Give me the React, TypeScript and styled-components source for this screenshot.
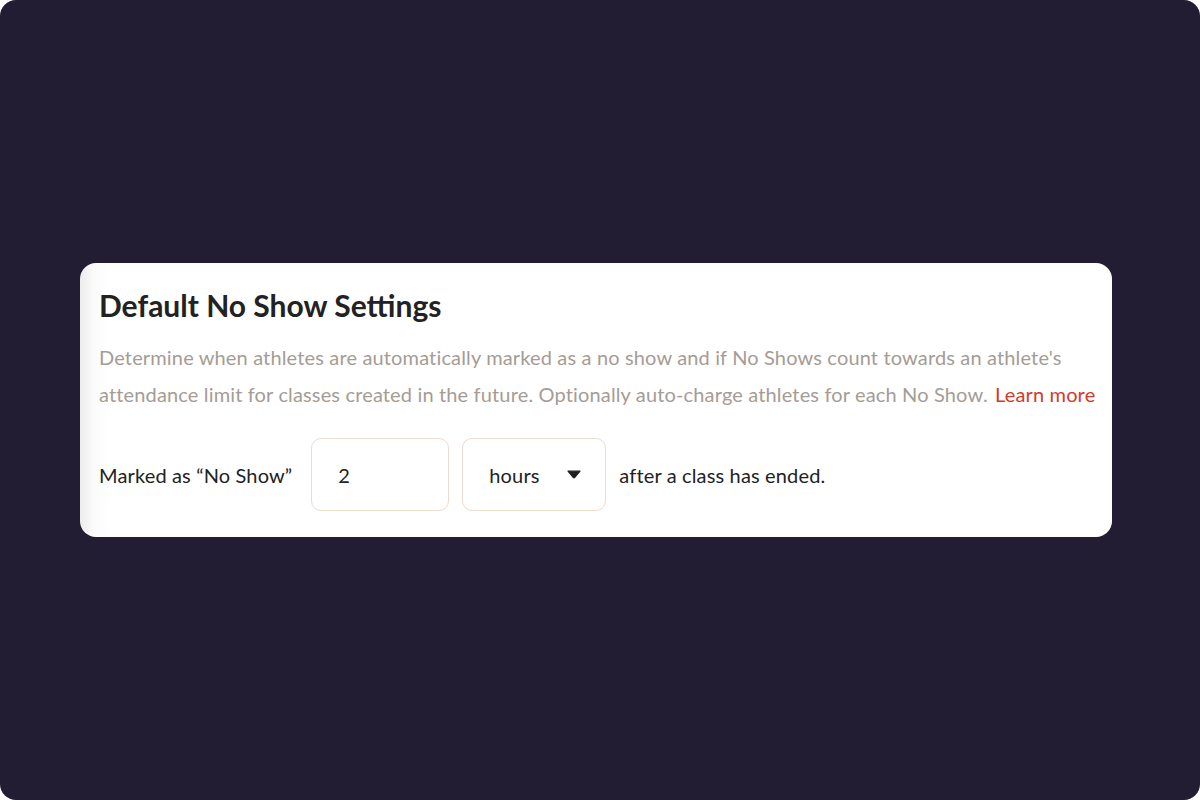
import React from 'react';
import styled, { createGlobalStyle } from 'styled-components';

const GlobalStyle = createGlobalStyle`
  html, body {
    margin: 0;
    padding: 0;
    background: #ffffff;
  }
  body {
    font-family: Lato, "Noto Sans", sans-serif;
  }
`;

const Screen = styled.div`
  width: 1200px;
  height: 800px;
  box-sizing: border-box;
  border-radius: 16px;
  background: #231d33;
  display: flex;
  align-items: center;
  padding-left: 80px;
`;

const Card = styled.section`
  width: 1032px;
  box-sizing: border-box;
  padding: 24px 8px 26px 19px;
  border-radius: 16px;
  background: linear-gradient(90deg, #ececec 0px, #fbfbfb 14px, #ffffff 30px);
`;

const Title = styled.h2`
  margin: 0;
  font-size: 30px;
  line-height: 36px;
  font-weight: 700;
  color: #222222;
`;

const Description = styled.p`
  margin: 16px 0 0;
  font-size: 20px;
  letter-spacing: 0.15px;
  line-height: 37px;
  color: #a59c95;
`;

const LearnMore = styled.a`
  margin-left: 2px;
  color: #d23a2a;
  text-decoration: none;
  white-space: nowrap;
  cursor: pointer;
`;

const Row = styled.div`
  display: flex;
  align-items: center;
  gap: 13px;
  margin-top: 25px;
  font-size: 20px;
  letter-spacing: 0.15px;
  color: #222222;
`;

const Label = styled.span`
  margin-right: 6px;
`;

const Field = styled.div<{ $width: number }>`
  width: ${(p) => p.$width}px;
  height: 73px;
  box-sizing: border-box;
  border: 1.5px solid #ecdccd;
  border-radius: 10px;
  display: flex;
  align-items: center;
  justify-content: space-between;
  padding: 0 24px 0 26px;
  color: #222222;
  background: #ffffff;
`;

const Caret = () => (
  <svg width="14" height="9" viewBox="0 0 14 9">
    <path d="M1 1.2 L13 1.2 L7.6 7.6 Q7 8.2 6.4 7.6 Z" fill="#1f1f1f" stroke="#1f1f1f" strokeWidth="1.2" strokeLinejoin="round" />
  </svg>
);

export default function App() {
  return (
    <>
      <GlobalStyle />
      <Screen>
        <Card>
          <Title>Default No Show Settings</Title>
          <Description>
            Determine when athletes are automatically marked as a no show and if No Shows count towards an
            athlete's attendance limit for classes created in the future. Optionally auto-charge athletes for
            each No Show. <LearnMore>Learn more</LearnMore>
          </Description>
          <Row>
            <Label>Marked as “No Show”</Label>
            <Field $width={138}>2</Field>
            <Field $width={144}>
              hours
              <Caret />
            </Field>
            <span>after a class has ended.</span>
          </Row>
        </Card>
      </Screen>
    </>
  );
}
